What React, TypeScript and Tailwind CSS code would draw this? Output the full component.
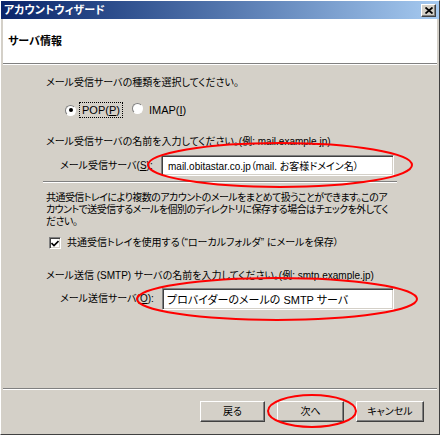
import React from 'react';

const font = "font-['Liberation_Sans','Noto_Sans_CJK_JP',sans-serif] [font-feature-settings:'palt']";

// raised 3D border used by Win2000 buttons
const raised =
  'border border-t-white border-l-white border-r-[#404040] border-b-[#404040] shadow-[inset_-1px_-1px_0_#808080]';

// sunken 3D border used by inputs and check boxes
const sunken =
  'border border-t-[#808080] border-l-[#808080] border-r-white border-b-white shadow-[inset_1px_1px_0_#404040,inset_-1px_-1px_0_#d4d0c8]';

const Radio = ({ checked }: { checked?: boolean }) => (
  <span className="relative inline-flex w-[11px] h-[11px] rounded-full bg-white border border-t-[#808080] border-l-[#808080] border-r-white border-b-white items-center justify-center">
    {checked && <span className="w-[4px] h-[4px] rounded-full bg-black" />}
  </span>
);

const Button = ({ label, width }: { label: string; width: string }) => (
  <button className={`${raised} ${width} h-[21px] bg-[#d4d0c8] text-[10px] leading-[12px] text-black ${font}`}>
    {label}
  </button>
);

export default function App() {
  return (
    <div className={`relative w-[440px] h-[435px] flex flex-col bg-[#d4d0c8] border border-t-white border-l-white border-r-[#404040] border-b-[#404040] text-black ${font}`}>
      {/* Title bar */}
      <div className="h-[18px] flex items-center justify-between bg-gradient-to-r from-[#0a246a] to-[#a6caf0] pl-[3px] pr-[3px]">
        <span className="text-white font-bold text-[11px] leading-[12px]">アカウントウィザード</span>
        <span className={`${raised} w-[15px] h-[13px] bg-[#d4d0c8] flex items-center justify-center`}>
          <svg width="8" height="7" viewBox="0 0 8 7">
            <path d="M0.5 0.5 L7.5 6.5 M7.5 0.5 L0.5 6.5" stroke="black" strokeWidth="1.8" />
          </svg>
        </span>
      </div>

      <div className="flex-1 flex flex-col px-[2px] pb-[1px]">
        {/* Header */}
        <div className="h-[44px] bg-white pl-[5px] pt-[9px]">
          <span className="font-bold text-[11px] leading-[12px]">サーバ情報</span>
        </div>
        <div className="h-[2px] border-t border-t-[#808080] border-b border-b-white" />

        {/* Content */}
        <div className="flex-1 flex flex-col pl-[43px] pt-[12px] text-[10px] leading-[12px]">
          <div className="whitespace-nowrap">メール受信サーバの種類を選択してください。</div>

          <div className="mt-[13px] h-[16px] flex items-center pl-[19px]">
            <Radio checked />
            <span className="ml-[3px] h-[16px] px-[2px] flex items-center border border-dotted border-black text-[11px]">
              POP(<span className="underline">P</span>)
            </span>
            <span className="ml-[9px]">
              <Radio />
            </span>
            <span className="ml-[6px] text-[11px]">
              IMAP(<span className="underline">I</span>)
            </span>
          </div>

          <div className="mt-[18px] whitespace-nowrap">メール受信サーバの名前を入力してください。(例: mail.example.jp)</div>

          <div className="mt-[7px] h-[21px] flex items-center pl-[14px]">
            <span className="w-[101px] whitespace-nowrap">
              メール受信サーバ(<span className="underline">S</span>):
            </span>
            <input
              readOnly
              value="mail.obitastar.co.jp（mail. お客様ドメイン名）"
              className={`${sunken} ${font} w-[233px] h-[21px] bg-white px-[6px] text-[10px] text-black outline-none`}
            />
          </div>

          <div className="mt-[5px] -ml-[3px] w-[354px] h-[2px] border-t border-t-[#808080] border-b border-b-white" />

          <div className="mt-[9px] whitespace-nowrap tracking-[-0.55px]">
            共通受信トレイにより複数のアカウントのメールをまとめて扱うことができます。このア
            <br />
            カウントで送受信するメールを個別のディレクトリに保存する場合はチェックを外してく
            <br />
            ださい。
          </div>

          <div className="mt-[8px] h-[14px] flex items-center pl-[3px]">
            <span className={`${sunken} w-[12px] h-[12px] bg-white flex items-center justify-center`}>
              <svg width="8" height="7" viewBox="0 0 8 7">
                <path d="M0.5 3 L3 5.5 L7.5 1" fill="none" stroke="black" strokeWidth="1.6" />
              </svg>
            </span>
            <span className="ml-[6px] whitespace-nowrap">
              共通受信トレイを使用する（“ローカルフォルダ” にメールを保存）
            </span>
          </div>

          <div className="mt-[20px] whitespace-nowrap">
            メール送信 (SMTP) サーバの名前を入力してください。(例: smtp.example.jp)
          </div>

          <div className="mt-[6px] h-[22px] flex items-center pl-[14px]">
            <span className="w-[102px] whitespace-nowrap">
              メール送信サーバ(<span className="underline">O</span>):
            </span>
            <input
              readOnly
              value="プロバイダーのメールの SMTP サーバ"
              className={`${sunken} ${font} w-[232px] h-[22px] bg-white px-[4px] text-[11px] text-black outline-none`}
            />
          </div>
        </div>

        {/* Bottom separator + buttons */}
        <div className="h-[2px] border-t border-t-[#808080] border-b border-b-white" />
        <div className="h-[43px] flex justify-end items-start pt-[11px] pr-[13px] gap-[12px]">
          <Button label="戻る" width="w-[65px]" />
          <Button label="次へ" width="w-[67px]" />
          <Button label="キャンセル" width="w-[68px]" />
        </div>
      </div>

      {/* Red annotation ellipses */}
      <svg className="absolute left-[-1px] top-[-1px] pointer-events-none" width="440" height="435">
        <ellipse cx="280" cy="165" rx="132" ry="22" fill="none" stroke="#ff0000" strokeWidth="2" />
        <ellipse cx="277" cy="299" rx="140" ry="21" fill="none" stroke="#ff0000" strokeWidth="2" />
        <ellipse cx="312" cy="411" rx="44" ry="16" fill="none" stroke="#ff0000" strokeWidth="2" />
      </svg>
    </div>
  );
}
